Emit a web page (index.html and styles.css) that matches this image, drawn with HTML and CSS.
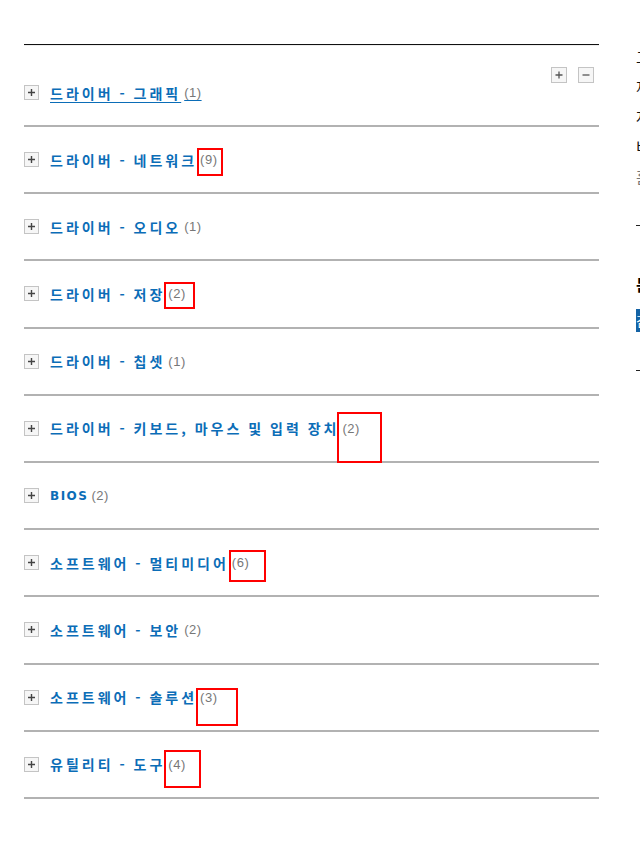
FILE: index.html
```html
<!DOCTYPE html>
<html lang="ko">
<head>
<meta charset="utf-8">
<title>드라이버 및 다운로드</title>
<link rel="stylesheet" href="styles.css">
</head>
<body>
<div class="page">
  <main class="main">
    <div class="list">
      <div class="row first">
        <a class="link active" href="#"><span class="toggle"><svg width="15" height="15" viewBox="0 0 15 15"><rect x="0.5" y="0.5" width="14" height="14" fill="#f6f6f6" stroke="#c4c4c4"/><path d="M4 7.5h7M7.5 4v7" stroke="#444" stroke-width="1.4"/></svg></span><span class="name">드라이버 - 그래픽</span> <span class="count">(1)</span></a>
        <div class="tools">
          <span class="tool"><svg width="16" height="16" viewBox="0 0 16 16"><rect x="0.5" y="0.5" width="15" height="15" fill="#f6f6f6" stroke="#c4c4c4"/><path d="M4.5 8h7M8 4.5v7" stroke="#555" stroke-width="1.3"/></svg></span>
          <span class="tool"><svg width="16" height="16" viewBox="0 0 16 16"><rect x="0.5" y="0.5" width="15" height="15" fill="#f6f6f6" stroke="#c4c4c4"/><path d="M4.5 8h7" stroke="#555" stroke-width="1.3"/></svg></span>
        </div>
      </div>
      <div class="row"><a class="link" href="#"><span class="toggle"><svg width="15" height="15" viewBox="0 0 15 15"><rect x="0.5" y="0.5" width="14" height="14" fill="#f6f6f6" stroke="#c4c4c4"/><path d="M4 7.5h7M7.5 4v7" stroke="#444" stroke-width="1.4"/></svg></span><span class="name">드라이버 - 네트워크</span><span class="count">(9)</span></a></div>
      <div class="row"><a class="link" href="#"><span class="toggle"><svg width="15" height="15" viewBox="0 0 15 15"><rect x="0.5" y="0.5" width="14" height="14" fill="#f6f6f6" stroke="#c4c4c4"/><path d="M4 7.5h7M7.5 4v7" stroke="#444" stroke-width="1.4"/></svg></span><span class="name">드라이버 - 오디오</span> <span class="count">(1)</span></a></div>
      <div class="row"><a class="link" href="#"><span class="toggle"><svg width="15" height="15" viewBox="0 0 15 15"><rect x="0.5" y="0.5" width="14" height="14" fill="#f6f6f6" stroke="#c4c4c4"/><path d="M4 7.5h7M7.5 4v7" stroke="#444" stroke-width="1.4"/></svg></span><span class="name">드라이버 - 저장</span><span class="count">(2)</span></a></div>
      <div class="row"><a class="link" href="#"><span class="toggle"><svg width="15" height="15" viewBox="0 0 15 15"><rect x="0.5" y="0.5" width="14" height="14" fill="#f6f6f6" stroke="#c4c4c4"/><path d="M4 7.5h7M7.5 4v7" stroke="#444" stroke-width="1.4"/></svg></span><span class="name">드라이버 - 칩셋</span> <span class="count">(1)</span></a></div>
      <div class="row"><a class="link" href="#"><span class="toggle"><svg width="15" height="15" viewBox="0 0 15 15"><rect x="0.5" y="0.5" width="14" height="14" fill="#f6f6f6" stroke="#c4c4c4"/><path d="M4 7.5h7M7.5 4v7" stroke="#444" stroke-width="1.4"/></svg></span><span class="name">드라이버 - 키보드, 마우스 및 입력 장치</span> <span class="count">(2)</span></a></div>
      <div class="row"><a class="link" href="#"><span class="toggle"><svg width="15" height="15" viewBox="0 0 15 15"><rect x="0.5" y="0.5" width="14" height="14" fill="#f6f6f6" stroke="#c4c4c4"/><path d="M4 7.5h7M7.5 4v7" stroke="#444" stroke-width="1.4"/></svg></span><span class="name latin">BIOS</span> <span class="count">(2)</span></a></div>
      <div class="row"><a class="link" href="#"><span class="toggle"><svg width="15" height="15" viewBox="0 0 15 15"><rect x="0.5" y="0.5" width="14" height="14" fill="#f6f6f6" stroke="#c4c4c4"/><path d="M4 7.5h7M7.5 4v7" stroke="#444" stroke-width="1.4"/></svg></span><span class="name">소프트웨어 - 멀티미디어</span> <span class="count">(6)</span></a></div>
      <div class="row"><a class="link" href="#"><span class="toggle"><svg width="15" height="15" viewBox="0 0 15 15"><rect x="0.5" y="0.5" width="14" height="14" fill="#f6f6f6" stroke="#c4c4c4"/><path d="M4 7.5h7M7.5 4v7" stroke="#444" stroke-width="1.4"/></svg></span><span class="name">소프트웨어 - 보안</span> <span class="count">(2)</span></a></div>
      <div class="row"><a class="link" href="#"><span class="toggle"><svg width="15" height="15" viewBox="0 0 15 15"><rect x="0.5" y="0.5" width="14" height="14" fill="#f6f6f6" stroke="#c4c4c4"/><path d="M4 7.5h7M7.5 4v7" stroke="#444" stroke-width="1.4"/></svg></span><span class="name">소프트웨어 - 솔루션</span><span class="count">(3)</span></a></div>
      <div class="row"><a class="link" href="#"><span class="toggle"><svg width="15" height="15" viewBox="0 0 15 15"><rect x="0.5" y="0.5" width="14" height="14" fill="#f6f6f6" stroke="#c4c4c4"/><path d="M4 7.5h7M7.5 4v7" stroke="#444" stroke-width="1.4"/></svg></span><span class="name">유틸리티 - 도구</span><span class="count">(4)</span></a></div>

      <span class="mark m1"></span>
      <span class="mark m2"></span>
      <span class="mark m3"></span>
      <span class="mark m4"></span>
      <span class="mark m5"></span>
      <span class="mark m6"></span>
    </div>
  </main>
  <aside class="side">
    <p class="side-text">고객 지원</p>
    <p class="side-text">제품 정보</p>
    <p class="side-text">자세히 보기</p>
    <p class="side-text">비교하기</p>
    <p class="side-text muted">홈페이지</p>
    <hr class="side-rule">
    <p class="side-head">문의</p>
    <span class="side-btn">검색</span>
    <hr class="side-rule">
  </aside>
</div>
</body>
</html>
```

FILE: styles.css
```css
html, body {
  margin: 0;
  padding: 0;
  overflow: hidden;
  background: #fff;
}

body {
  font-family: "Noto Sans CJK KR", "Noto Sans", sans-serif;
}

.page {
  display: flex;
  width: 940px;
  padding-top: 44px;
}

.main {
  width: 575px;
  margin-left: 24px;
  flex: none;
}

.list {
  position: relative;
  border-top: 1px solid #111;
  box-shadow: inset 0 1px 0 #eee;
  padding-top: 15px;
}

.row {
  box-sizing: border-box;
  height: 67.2px;
  display: flex;
  align-items: center;
  border-bottom: 2px solid #b2b2b2;
}

.row.first {
  height: 67px;
}

.link {
  display: flex;
  align-items: center;
  text-decoration: none;
  color: #0b6db7;
}

.link.active {
  text-decoration: underline;
  text-decoration-color: #0b6db7;
  text-underline-offset: 3px;
}

.toggle {
  display: inline-flex;
  width: 15px;
  height: 15px;
  margin-right: 11px;
}

.toggle svg {
  display: block;
}

.name {
  font-size: 14px;
  font-weight: 700;
  letter-spacing: 3px;
  word-spacing: -1px;
  white-space: pre;
}

.name.latin {
  font-family: "DejaVu Sans", sans-serif;
  font-size: 12px;
  letter-spacing: 1.5px;
}

.count {
  font-family: "Liberation Sans", sans-serif;
  font-size: 13px;
  color: #777;
  margin-left: 3px;
  letter-spacing: 0.5px;
}

.link.active .count {
  margin-left: 3px;
}

.tools {
  display: flex;
  gap: 11px;
  margin-left: auto;
  margin-right: 5px;
  align-self: flex-start;
  margin-top: 7px;
}

.tool svg {
  display: block;
}

.mark {
  position: absolute;
  border: 2px solid #f00;
  box-sizing: border-box;
}

.m1 { left: 173px; top: 103px; width: 26px; height: 28px; }
.m2 { left: 140px; top: 237px; width: 31px; height: 27px; }
.m3 { left: 313px; top: 367px; width: 45px; height: 51px; }
.m4 { left: 205px; top: 505px; width: 37px; height: 32px; }
.m5 { left: 172px; top: 643px; width: 42px; height: 38px; }
.m6 { left: 140px; top: 705px; width: 37px; height: 38px; }

.side {
  margin-left: 37px;
  width: 300px;
  flex: none;
  padding-top: 2px;
}

.side-text {
  margin: 0 0 8px;
  font-size: 15px;
  line-height: 22px;
  color: #111;
}

.side-text.muted {
  color: #777;
  margin-bottom: 37px;
}

.side-rule {
  margin: 0;
  border: 0;
  border-top: 1px solid #222;
}

.side-head {
  margin: 50px 0 17px;
  font-size: 16px;
  font-weight: 700;
  line-height: 16px;
  color: #000;
}

.side-btn {
  display: block;
  width: 120px;
  height: 23px;
  background: #1463a5;
  color: #fff;
  font-size: 13px;
  line-height: 23px;
  margin-bottom: 38px;
}
```
